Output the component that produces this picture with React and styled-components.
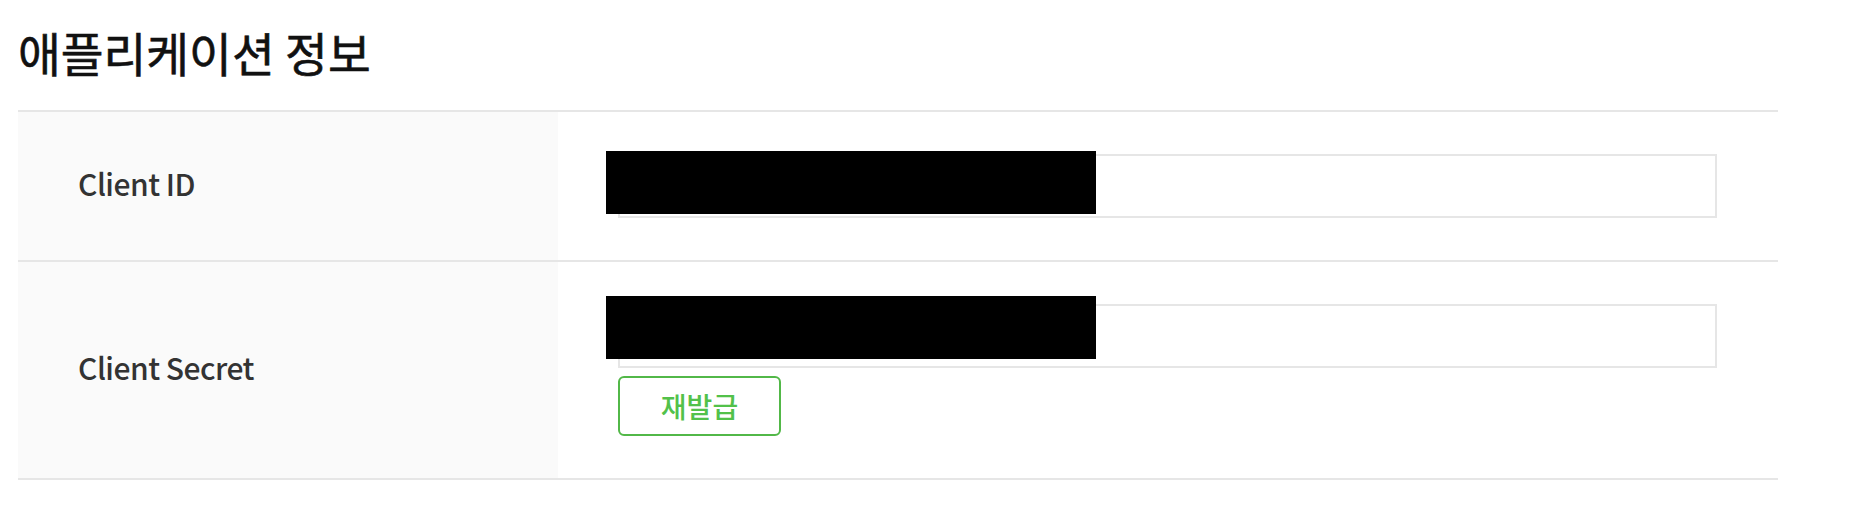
import React from "react";
import styled, { createGlobalStyle } from "styled-components";

const Global = createGlobalStyle`
  html, body { margin: 0; padding: 0; background: #ffffff; }
  body { font-family: "Noto Sans CJK KR", "Noto Sans", sans-serif; }
`;

const Page = styled.div`
  padding: 28px 78px 0 18px;
`;

const Title = styled.h2`
  margin: 0 0 34px 0;
  font-size: 46.5px;
  line-height: 48px;
  font-weight: 400;
  color: #111111;
  -webkit-text-stroke: 0.6px #111111;
  letter-spacing: 0;
`;

const Table = styled.div`
  border-top: 2px solid #e6e6e6;
`;

const Row = styled.div`
  display: grid;
  grid-template-columns: 540px 1fr;
  border-bottom: 2px solid #e6e6e6;
`;

const Label = styled.div`
  background: #fafafa;
  display: flex;
  align-items: center;
  padding: 0 0 6px 60px;
  font-size: 30px;
  font-weight: 500;
  color: #333333;
  letter-spacing: -0.5px;
`;

const Value = styled.div`
  padding: 42px 61px 42px 60px;
  display: flex;
  flex-direction: column;
  gap: 8px;
  align-items: flex-start;
`;

const Field = styled.div`
  position: relative;
  align-self: stretch;
  height: 64px;
  box-sizing: border-box;
  border: 2px solid #e6e6e6;
  background: #ffffff;
`;

const Redaction = styled.div`
  position: absolute;
  left: -14px;
  top: ${(p) => p.$top}px;
  width: 490px;
  height: 63px;
  background: #000000;
`;

const Button = styled.button`
  width: 163px;
  height: 60px;
  box-sizing: border-box;
  border: 2px solid #52b848;
  border-radius: 6px;
  background: #ffffff;
  color: #52c14a;
  font-family: "Noto Sans CJK KR", sans-serif;
  font-size: 28px;
  font-weight: 500;
  padding: 0;
  cursor: pointer;
`;

export default function App() {
  return (
    <>
      <Global />
      <Page>
        <Title>애플리케이션 정보</Title>
        <Table>
          <Row>
            <Label>Client ID</Label>
            <Value>
              <Field>
                <Redaction $top={-5} />
              </Field>
            </Value>
          </Row>
          <Row>
            <Label>Client Secret</Label>
            <Value>
              <Field>
                <Redaction $top={-10} />
              </Field>
              <Button>재발급</Button>
            </Value>
          </Row>
        </Table>
      </Page>
    </>
  );
}
